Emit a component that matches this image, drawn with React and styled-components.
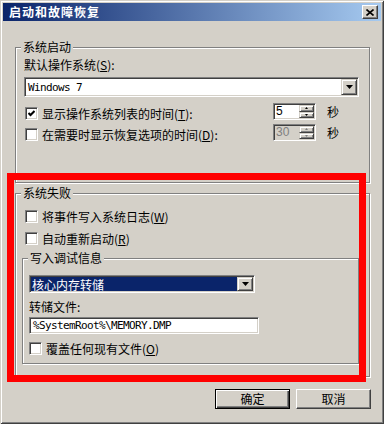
import React from "react";
import styled, { createGlobalStyle } from "styled-components";

const GlobalStyle = createGlobalStyle`
  html, body { margin: 0; padding: 0; background: #d4d0c8; }
  body {
    font-family: "Noto Sans CJK SC", "Noto Sans", sans-serif;
    font-size: 12px;
    color: #000;
  }
  * { box-sizing: border-box; }
`;

const Window = styled.div`
  position: relative;
  width: 384px;
  height: 424px;
  padding: 3px;
  background: #d4d0c8;
  display: flex;
  flex-direction: column;
  box-shadow: inset 1px 1px 0 #d4d0c8, inset -1px -1px 0 #404040,
    inset 2px 2px 0 #ffffff, inset -2px -2px 0 #808080;
`;

const TitleBar = styled.div`
  height: 18px;
  display: flex;
  align-items: center;
  padding: 0 3px;
  background: linear-gradient(to right, #0a246a, #a6caf0);
`;

const TitleText = styled.span`
  margin-left: 3px;
  color: #fff;
  font-weight: bold;
  font-size: 12px;
  letter-spacing: 1px;
  line-height: 14px;
`;

const CloseBtn = styled.div`
  margin-left: auto;
  width: 16px;
  height: 14px;
  background: #d4d0c8;
  border: 1px solid;
  border-color: #fff #404040 #404040 #fff;
  box-shadow: inset -1px -1px 0 #808080;
  display: flex;
  align-items: center;
  justify-content: center;
`;

const Body = styled.div`
  flex: 1;
  display: flex;
  flex-direction: column;
  padding: 26px 10px 12px 12px;
`;

const GroupBox = styled.div`
  position: relative;
  border: 1px solid #808080;
  box-shadow: inset 1px 1px 0 #fff, 1px 1px 0 #fff;
  height: ${(p) => p.$h}px;
  margin-right: ${(p) => (p.$outer ? 1 : 0)}px;
  margin-top: ${(p) => p.$mt || 0}px;
  padding: ${(p) => p.$pad};
  display: flex;
  flex-direction: column;
  flex-shrink: 0;
`;

const Legend = styled.span`
  position: absolute;
  top: -8px;
  left: 5px;
  padding: 0 2px;
  background: #d4d0c8;
  line-height: 14px;
  white-space: nowrap;
`;

const Label = styled.div`
  line-height: 14px;
  margin-top: ${(p) => p.$mt || 0}px;
  white-space: nowrap;
`;

const Sunken = styled.div`
  border: 1px solid;
  border-color: #808080 #fff #fff #808080;
  box-shadow: inset 1px 1px 0 #404040, inset -1px -1px 0 #d4d0c8;
  padding: 1px;
`;

const Combo = styled(Sunken)`
  width: ${(p) => p.$w}px;
  height: ${(p) => p.$h}px;
  margin-top: ${(p) => p.$mt || 0}px;
  background: #fff;
  display: flex;
  flex-shrink: 0;
`;

const ComboValue = styled.div`
  flex: 1;
  display: flex;
  align-items: center;
  padding-left: ${(p) => (p.$selected ? 1 : 2)}px;
  background: ${(p) => (p.$selected ? "#0a246a" : "#fff")};
  color: ${(p) => (p.$selected ? "#fff" : "#000")};
  white-space: nowrap;
  overflow: hidden;
`;

const Mono = styled.span`
  font-family: "DejaVu Sans Mono", "Liberation Mono", monospace;
  font-size: 11px;
  letter-spacing: -0.62px;
`;

const RaisedBtn = styled.div`
  width: ${(p) => p.$w}px;
  height: 100%;
  background: #d4d0c8;
  border: 1px solid;
  border-color: #d4d0c8 #404040 #404040 #d4d0c8;
  box-shadow: inset 1px 1px 0 #fff, inset -1px -1px 0 #808080;
  display: flex;
  align-items: center;
  justify-content: center;
  flex-shrink: 0;
`;

const TextInput = styled(Sunken)`
  width: ${(p) => p.$w}px;
  height: 17px;
  margin-top: ${(p) => p.$mt || 0}px;
  background: #fff;
  display: flex;
  align-items: center;
  padding-left: 3px;
  flex-shrink: 0;
`;

const Row = styled.div`
  display: flex;
  align-items: flex-start;
  margin-top: ${(p) => p.$mt || 0}px;
  flex-shrink: 0;
`;

const CheckLine = styled.label`
  display: flex;
  align-items: center;
  height: 13px;
  margin-top: ${(p) => p.$mt || 0}px;
  margin-left: ${(p) => p.$indent || 0}px;
  white-space: nowrap;
  flex-shrink: 0;
`;

const CheckBox = styled(Sunken)`
  width: 13px;
  height: 13px;
  padding: 0;
  background: #fff;
  display: flex;
  align-items: center;
  justify-content: center;
  margin-right: 4px;
  flex-shrink: 0;
`;

const CheckText = styled.span`
  line-height: 14px;
`;

const Spin = styled(Sunken)`
  margin-left: auto;
  width: 43px;
  height: 17px;
  padding: 1px;
  display: flex;
  background: ${(p) => (p.$disabled ? "#d4d0c8" : "#fff")};
`;

const SpinValue = styled.div`
  flex: 1;
  font-family: "Liberation Sans", Arial, sans-serif;
  font-size: 12px;
  line-height: 13px;
  padding-left: 1px;
  color: ${(p) => (p.$disabled ? "#808080" : "#000")};
`;

const SpinBtns = styled.div`
  width: 15px;
  display: flex;
  flex-direction: column;
`;

const SpinBtn = styled.div`
  flex: 1;
  background: #d4d0c8;
  border: 1px solid;
  border-color: #d4d0c8 #404040 #404040 #d4d0c8;
  box-shadow: inset 1px 1px 0 #fff, inset -1px -1px 0 #808080;
  display: flex;
  align-items: center;
  justify-content: center;
`;

const Unit = styled.span`
  margin-left: 11px;
  margin-right: 20px;
  line-height: 17px;
`;

const ButtonRow = styled.div`
  display: flex;
  justify-content: flex-end;
  gap: 6px;
  margin-top: 12px;
`;

const PushButton = styled.div`
  width: 75px;
  height: 20px;
  background: #d4d0c8;
  display: flex;
  align-items: center;
  justify-content: center;
  border: 1px solid;
  border-color: ${(p) => (p.$default ? "#000" : "#fff #404040 #404040 #fff")};
  box-shadow: ${(p) =>
    p.$default
      ? "inset 1px 1px 0 #fff, inset -1px -1px 0 #404040, inset -2px -2px 0 #808080"
      : "inset -1px -1px 0 #808080"};
  line-height: 14px;
`;

const RedMark = styled.div`
  position: absolute;
  left: 7px;
  top: 173px;
  width: 359px;
  height: 209px;
  border: 7px solid #ff0000;
  pointer-events: none;
`;

const DownArrow = ({ color = "#000" }) => (
  <svg width="7" height="4" viewBox="0 0 7 4">
    <polygon points="0,0 7,0 3.5,4" fill={color} />
  </svg>
);

const TinyArrow = ({ up, color = "#000" }) => (
  <svg width="3" height="2" viewBox="0 0 3 2">
    <polygon points={up ? "1.5,0 3,2 0,2" : "0,0 3,0 1.5,2"} fill={color} />
  </svg>
);

const Check = ({ checked }) => (
  <CheckBox>
    {checked && (
      <svg width="7" height="7" viewBox="0 0 7 7">
        <polyline points="0.5,3 2.5,5 6.5,1" fill="none" stroke="#000" strokeWidth="2" />
      </svg>
    )}
  </CheckBox>
);

const SpinBox = ({ value, disabled }) => (
  <Spin $disabled={disabled}>
    <SpinValue $disabled={disabled}>{value}</SpinValue>
    <SpinBtns>
      <SpinBtn>
        <TinyArrow up color={disabled ? "#808080" : "#000"} />
      </SpinBtn>
      <SpinBtn>
        <TinyArrow color={disabled ? "#808080" : "#000"} />
      </SpinBtn>
    </SpinBtns>
  </Spin>
);

export default function App() {
  return (
    <>
      <GlobalStyle />
      <Window>
        <TitleBar>
          <TitleText>启动和故障恢复</TitleText>
          <CloseBtn>
            <svg width="8" height="7" viewBox="0 0 8 7">
              <path d="M0.5 0.5 L7.5 6.5 M7.5 0.5 L0.5 6.5" stroke="#000" strokeWidth="1.6" />
            </svg>
          </CloseBtn>
        </TitleBar>
        <Body>
          <GroupBox $outer $h={136} $pad="10px 10px 0 8px">
            <Legend>系统启动</Legend>
            <Label>
              默认操作系统(<u>S</u>):
            </Label>
            <Combo $w={335} $h={20} $mt={5}>
              <ComboValue>
                <Mono>Windows 7</Mono>
              </ComboValue>
              <RaisedBtn $w={16}>
                <DownArrow />
              </RaisedBtn>
            </Combo>
            <Row $mt={6}>
              <CheckLine $mt={4} $indent={1}>
                <Check checked />
                <CheckText>
                  显示操作系统列表的时间(<u>T</u>):
                </CheckText>
              </CheckLine>
              <SpinBox value="5" />
              <Unit>秒</Unit>
            </Row>
            <Row $mt={4}>
              <CheckLine $mt={4} $indent={1}>
                <Check />
                <CheckText>
                  在需要时显示恢复选项的时间(<u>D</u>):
                </CheckText>
              </CheckLine>
              <SpinBox value="30" disabled />
              <Unit>秒</Unit>
            </Row>
          </GroupBox>

          <GroupBox $outer $h={184} $mt={10} $pad="16px 10px 0 6px">
            <Legend>系统失败</Legend>
            <CheckLine $indent={3}>
              <Check />
              <CheckText>
                将事件写入系统日志(<u>W</u>)
              </CheckText>
            </CheckLine>
            <CheckLine $indent={3} $mt={9}>
              <Check />
              <CheckText>
                自动重新启动(<u>R</u>)
              </CheckText>
            </CheckLine>
            <GroupBox $h={106} $mt={13} $pad="16px 6px 0 6px">
              <Legend>写入调试信息</Legend>
              <Combo $w={226} $h={18}>
                <ComboValue $selected>核心内存转储</ComboValue>
                <RaisedBtn $w={16}>
                  <DownArrow />
                </RaisedBtn>
              </Combo>
              <Label $mt={7}>转储文件:</Label>
              <TextInput $w={230} $mt={3}>
                <Mono>%SystemRoot%\MEMORY.DMP</Mono>
              </TextInput>
              <CheckLine $mt={8}>
                <Check />
                <CheckText>
                  覆盖任何现有文件(<u>O</u>)
                </CheckText>
              </CheckLine>
            </GroupBox>
          </GroupBox>

          <ButtonRow>
            <PushButton $default>确定</PushButton>
            <PushButton>取消</PushButton>
          </ButtonRow>
        </Body>
        <RedMark />
      </Window>
    </>
  );
}
